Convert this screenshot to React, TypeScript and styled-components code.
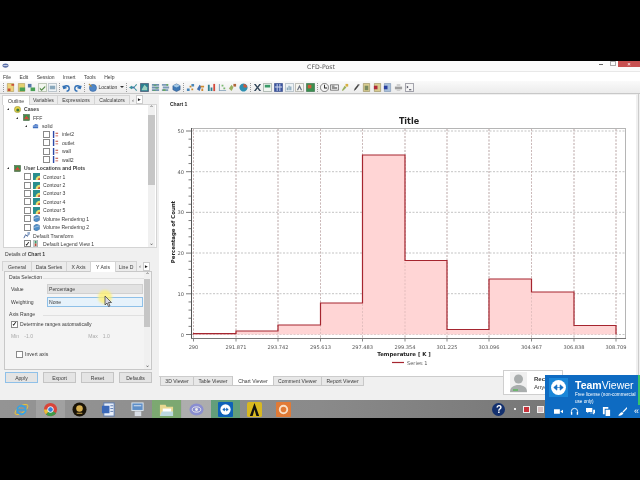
import styled, { createGlobalStyle } from 'styled-components';

const GlobalStyle = createGlobalStyle`
  html, body {
    margin: 0;
    padding: 0;
    background: #000;
  }
`;

// a = fill of the base shape, b = fill of the overlay, s = outline
type Glyph = { d: string; a: string; e?: string; b?: string; s?: string; line?: boolean };

const SHEET = 'M1.500 .5h7v9h-7z';
const BOX = 'M.5 .5h9v9h-9z';
const CUBE = 'M1 3l4-2 4 2v4.500l-4 2-4-2z';

const fileTools: Glyph[] = [
  { d: SHEET, a: '#eed27a', e: 'M2 6h3v3H2zM6 1h3v2H6z', b: '#c8503a', s: '#a89050' },
  { d: SHEET, a: '#e2d070', e: 'M3 5h6v4H3z', b: '#49a055', s: '#a89050' },
  { d: 'M1 1h4v4H1z', a: '#5578a8', e: 'M4 5h5v4H4z', b: '#49a055' },
  { d: BOX, a: '#f2f6ee', e: 'M2 5l2 2 4-4v2L4 9 2 7z', b: '#5a8f50', s: '#8a9a80' },
  { d: BOX, a: '#f0f4f6', e: 'M2 3h6v4H2z', b: '#8aa8bc', s: '#8a9aa8' },
];

const historyTools: Glyph[] = [
  { d: 'M2 6a3 3 0 1 1 3 3M1 3l1 3 3-1', a: 'none', s: '#2f6fb5', line: true },
  { d: 'M8 6a3 3 0 1 0-3 3M9 3L8 6 5 5', a: 'none', s: '#2f6fb5', line: true },
];

const locationTools: Glyph[] = [
  { d: 'M0 5l3-2 2 2-2 2zM5 5l3-4 1 1-3 3 3 3-1 1z', a: '#3a8f9a', e: 'M4 4h2v2H4z', b: '#3f6fb0' },
  { d: BOX, a: '#2c7f90', e: 'M2 7l3-5 3 3v3H2z', b: '#9cd0c0', s: '#335' },
  { d: 'M1 1h8v2H1zM1 4h8v2H1zM1 7h8v2H1z', a: '#6d8fae', e: 'M3 2h3v1H3zM5 5h3v1H5zM2 8h3v1H2z', b: '#5aa860' },
  { d: 'M1 1h7v2H1zM2 4h7v2H2zM1 7h7v2H1z', a: '#7c9ab8', e: 'M6 1h2v2H6zM2 7h3v2H2z', b: '#6aaa60' },
  { d: CUBE, a: '#3d78b5', e: 'M1 3l4 2 4-2-4-2z', b: '#a4c8e4', s: '#2a5080' },
];

const plotTools: Glyph[] = [
  { d: 'M1 6h3v3H1zM6 1h3v3H6z', a: '#4a86b8', e: 'M4 3h2v2H4zM6 6h2v2H6z', b: '#c98a2e' },
  { d: 'M1 7l3-5 2 2-2 5z', a: '#3f6fb0', e: 'M5 3h4v2H5zM6 6h2v3H6z', b: '#d08a30' },
  { d: 'M1 2h2v7H1zM4 5h2v4H4z', a: '#2f7f8f', e: 'M7 1h2v8H7z', b: '#d4483a' },
  { d: 'M1 9V1h1v7h7v1z', a: '#7d9cb5', e: 'M4 2h2v2H4zM6 5h2v2H6z', b: '#7ab870' },
  { d: 'M1 6l3-4 2 3-2 4z', a: '#9ab060', e: 'M6 1h3v3H6z', b: '#b0643a' },
  { d: 'M5 .5a4.500 4.500 0 1 0 .01 0z', a: '#2d8fb0', e: 'M5 1a4 4 0 0 1 4 4H5z', b: '#d05a3a' },
];

const reportTools: Glyph[] = [
  { d: 'M1 1h2l2 3 2-3h2L6 5l3 4H7L5 6 3 9H1l3-4z', a: '#33475a' },
  { d: BOX, a: '#f0f5f0', e: 'M2 2h6v3H2z', b: '#3a9a68', s: '#7a8a80' },
  { d: BOX, a: '#3b55a0', e: 'M3 1h1v8H3zM6 1h1v8H6zM1 4h8v1H1z', b: '#d4dcf0', s: '#2a3f80' },
  { d: BOX, a: '#eef3f6', e: 'M2 8V5h1v3zM4 8V3h1v5zM6 8V4h1v4z', b: '#5f88a0', s: '#8a9aa8' },
  { d: BOX, a: '#f6f6f0', e: 'M2 8l3-6 3 6H6.500L5 5 3.500 8z', b: '#6a7080', s: '#8a8a80' },
  { d: BOX, a: '#3a8f50', e: 'M2 2h4v4H2z', b: '#d05a3a', s: '#2a6038' },
];

const outputTools: Glyph[] = [
  { d: 'M5 .5a4.500 4.500 0 1 0 .01 0z', a: '#f4f4f4', e: 'M4.500 2h1v3H8v1H4.500z', b: '#222', s: '#222' },
  { d: 'M.5 2h9v6h-9z', a: '#f4f4f4', e: 'M2 3h3v1H2zM2 5h6v1H2z', b: '#333', s: '#222' },
  { d: 'M1 8l3-5 2 2-4 4z', a: '#9ab060', e: 'M5 1h3v3H5z', b: '#d8b040' },
  { d: 'M2 9l1-3 4-5 1.500 1-4 5z', a: '#444', e: 'M7 1l1.500 1-1 1-1.500-1z', b: '#888' },
  { d: SHEET, a: '#d9cc90', e: 'M3 3h4v5H3z', b: '#7a8a60', s: '#8a8050' },
  { d: SHEET, a: '#d9cc90', e: 'M1 3h4v4H1z', b: '#b02838', s: '#8a8050' },
  { d: SHEET, a: '#a8c0dc', e: 'M1 3h4v4H1z', b: '#2840a0', s: '#7088a8' },
  { d: 'M1 4h8v3H1z', a: '#a0a0a0', e: 'M3 1h4v3H3zM3 7h4v2H3z', b: '#d0d0d0' },
  { d: BOX, a: '#f4f4f4', e: 'M2 3l2 1.500L2 6zM4.500 7H7v1H4.500z', b: '#445', s: '#556' },
];

const ToolIcon = ({ glyph }: { glyph: Glyph }) => (
  <ToolSvg viewBox="0 0 10 10">
    <path d={glyph.d} fill={glyph.a} stroke={glyph.s || 'none'} strokeWidth={glyph.line ? 1.500 : 0.6} />
    {glyph.e && <path d={glyph.e} fill={glyph.b} />}
  </ToolSvg>
);

const ToolGroup = ({ items }: { items: Glyph[] }) => (
  <IconRun>
    {items.map((g, i) => (
      <ToolIcon key={i} glyph={g} />
    ))}
  </IconRun>
);

type TreeItem = {
  label: string;
  level: number;
  kind: 'root' | 'model' | 'solid' | 'bc' | 'contour' | 'volume' | 'transform' | 'legend';
  bold?: boolean;
  arrow?: boolean;
  check?: 'off' | 'on';
};

const treeItems: TreeItem[] = [
  { label: 'Cases', level: 7, kind: 'root', bold: true, arrow: true },
  { label: 'FFF', level: 16, kind: 'model', arrow: true },
  { label: 'solid', level: 25, kind: 'solid', arrow: true },
  { label: 'inlet2', level: 43, kind: 'bc', check: 'off' },
  { label: 'outlet', level: 43, kind: 'bc', check: 'off' },
  { label: 'wall', level: 43, kind: 'bc', check: 'off' },
  { label: 'wall2', level: 43, kind: 'bc', check: 'off' },
  { label: 'User Locations and Plots', level: 7, kind: 'model', bold: true, arrow: true },
  { label: 'Contour 1', level: 24, kind: 'contour', check: 'off' },
  { label: 'Contour 2', level: 24, kind: 'contour', check: 'off' },
  { label: 'Contour 3', level: 24, kind: 'contour', check: 'off' },
  { label: 'Contour 4', level: 24, kind: 'contour', check: 'off' },
  { label: 'Contour 5', level: 24, kind: 'contour', check: 'off' },
  { label: 'Volume Rendering 1', level: 24, kind: 'volume', check: 'off' },
  { label: 'Volume Rendering 2', level: 24, kind: 'volume', check: 'off' },
  { label: 'Default Transform', level: 23, kind: 'transform' },
  { label: 'Default Legend View 1', level: 24, kind: 'legend', check: 'on' },
];

const TreeIcon = ({ kind }: { kind: TreeItem['kind'] }) => {
  switch (kind) {
    case 'root':
      return (
        <TreeSvg viewBox="0 0 8 8">
          <circle cx="4" cy="4" r="3.600" fill="#e6d34a" stroke="#7b7b30" strokeWidth=".5" />
          <circle cx="4.400" cy="4.600" r="1.800" fill="#3c7a3c" />
        </TreeSvg>
      );
    case 'model':
      return (
        <TreeSvg viewBox="0 0 8 8">
          <rect x=".5" y=".5" width="7" height="7" fill="#3f8f4a" stroke="#3a4a30" strokeWidth=".5" />
          <path d="M1 6l3-4 3 4z" fill="#d0483a" />
        </TreeSvg>
      );
    case 'solid':
      return (
        <TreeSvg viewBox="0 0 8 8">
          <path d="M1 3l3-2 3 1v4H1z" fill="#3f6fc0" />
          <path d="M1 3h6v1H1z" fill="#a8c4ec" />
        </TreeSvg>
      );
    case 'bc':
      return (
        <TreeSvg viewBox="0 0 8 8">
          <path d="M1 0h1.600v8H1z" fill="#2c48a8" />
          <path d="M4 2h3v1H4zM4 5h3v1H4z" fill="#c0483a" />
        </TreeSvg>
      );
    case 'contour':
      return (
        <TreeSvg viewBox="0 0 8 8">
          <rect width="8" height="8" fill="#2a8f8f" />
          <path d="M3 8c0-3 2-5 5-5v5z" fill="#e8e070" />
          <path d="M5.500 8c0-1.500 1-2.500 2.500-2.500V8z" fill="#d05a3a" />
        </TreeSvg>
      );
    case 'volume':
      return (
        <TreeSvg viewBox="0 0 8 8">
          <path d="M1 2l3-2 3.500 1.500V6L4 8 1 6.500z" fill="#4f8fc8" stroke="#2a4a78" strokeWidth=".4" />
          <path d="M1 4l3-1 3.500-1" stroke="#e8f0f8" strokeWidth=".6" fill="none" />
        </TreeSvg>
      );
    case 'transform':
      return (
        <TreeSvg viewBox="0 0 8 8">
          <path d="M1 7l2-4 2 2 2-4" stroke="#35558f" strokeWidth="1" fill="none" />
          <path d="M5 0h3v3H5z" fill="#9ab0d0" />
        </TreeSvg>
      );
    default:
      return (
        <TreeSvg viewBox="0 0 8 8">
          <rect x="1" y="0" width="4" height="8" fill="#e8f0e8" stroke="#456" strokeWidth=".5" />
          <rect x="2" y="1" width="2" height="3" fill="#3a9a6a" />
          <rect x="2" y="4" width="2" height="3" fill="#c0483a" />
        </TreeSvg>
      );
  }
};

const TreeRowItem = ({ item }: { item: TreeItem }) => (
  <TreeRow $level={item.level}>
    {item.arrow && <Expander />}
    {item.check && <CheckBox>{item.check === 'on' ? '✓' : ''}</CheckBox>}
    <TreeIcon kind={item.kind} />
    <TreeLabel $bold={item.bold}>{item.label}</TreeLabel>
  </TreeRow>
);

const xTicks = [
  { x: 193.500, label: '290' },
  { x: 236, label: '291.871' },
  { x: 278, label: '293.742' },
  { x: 320.500, label: '295.613' },
  { x: 362.500, label: '297.483' },
  { x: 405, label: '299.354' },
  { x: 447, label: '301.225' },
  { x: 489, label: '303.096' },
  { x: 531.500, label: '304.967' },
  { x: 574, label: '306.838' },
  { x: 616, label: '308.709' },
];

const yTicks = [
  { y: 131, label: '50' },
  { y: 171.700, label: '40' },
  { y: 212.300, label: '30' },
  { y: 253, label: '20' },
  { y: 293.700, label: '10' },
  { y: 334.500, label: '0' },
];

const barTops = [333.700, 331, 325, 303, 155, 260.500, 329.500, 279, 292, 325.500];

const histogram =
  `M${xTicks[0].x} 334.500 ` +
  barTops.map((t, i) => `L${xTicks[i].x} ${t} L${xTicks[i + 1].x} ${t}`).join(' ') +
  ` L${xTicks[10].x} 334.500`;

const minorTicks = Array.from({ length: 26 }, (_, i) => 334.500 - i * 8.140);

const Histogram = () => (
  <ChartSvg viewBox="159 104 477 273">
    <rect x="191.500" y="128.500" width="434" height="210" fill="#fff" stroke="#b5b5b5" />
    {xTicks.map((t) => (
      <line key={t.x} x1={t.x} x2={t.x} y1="129" y2="338" stroke="#b4b4b4" strokeWidth=".8" strokeDasharray="2 1.500" />
    ))}
    {yTicks.map((t) => (
      <line key={t.y} x1="192" x2="625" y1={t.y} y2={t.y} stroke="#b4b4b4" strokeWidth=".8" strokeDasharray="2 1.500" />
    ))}
    <path d={histogram + ' Z'} fill="#ffd5d5" stroke="none" />
    {xTicks.map((t) => (
      <line key={`o${t.x}`} x1={t.x} x2={t.x} y1="129" y2="338" stroke="#d0b0b0" strokeWidth=".6" strokeDasharray="2 1.500" />
    ))}
    <path d={histogram} fill="none" stroke="#a5252f" strokeWidth="1.200" />
    <line x1="191.500" x2="191.500" y1="128" y2="339" stroke="#555" />
    <line x1="191" x2="626" y1="338.500" y2="338.500" stroke="#777" />
    {minorTicks.map((y, i) => (
      <line key={y} x1={i % 5 === 0 ? 186 : 188.500} x2="191" y1={y} y2={y} stroke="#444" strokeWidth=".7" />
    ))}
    {xTicks.map((t) => (
      <line key={`t${t.x}`} x1={t.x} x2={t.x} y1="339" y2="341.500" stroke="#555" strokeWidth=".7" />
    ))}
    {yTicks.map((t) => (
      <AxisText key={t.label} x="184" y={t.y + 2} textAnchor="end">
        {t.label}
      </AxisText>
    ))}
    {xTicks.map((t) => (
      <AxisText key={t.label} x={t.x} y="349" textAnchor="middle">
        {t.label}
      </AxisText>
    ))}
    <TitleText x="409" y="124" textAnchor="middle">Title</TitleText>
    <AxisTitle x="404" y="356" textAnchor="middle">Temperature [ K ]</AxisTitle>
    <AxisTitle transform="translate(175 232) rotate(-90)" textAnchor="middle">Percentage of Count</AxisTitle>
    <line x1="392" x2="404" y1="362.500" y2="362.500" stroke="#a5252f" strokeWidth="1.200" />
    <AxisText x="407" y="364.500">Series 1</AxisText>
  </ChartSvg>
);

const TaskIcons = () => (
  <>
    <TaskSlot>
      <TaskSvg viewBox="0 0 16 16">
        <ellipse cx="8" cy="8" rx="8" ry="3.500" fill="none" stroke="#e8c23a" strokeWidth="1" transform="rotate(-35 8 8)" />
        <circle cx="8" cy="8.500" r="4.500" fill="none" stroke="#3aa0e0" strokeWidth="2" />
        <path d="M4 8.500h8" stroke="#3aa0e0" strokeWidth="1.500" />
      </TaskSvg>
    </TaskSlot>
    <TaskSlot $tint="rgba(255,255,255,.14)">
      <TaskSvg viewBox="0 0 16 16">
        <circle cx="8" cy="8" r="7" fill="#d8443a" />
        <path d="M8 8L14 12A7 7 0 0 1 3 13z" fill="#3d9a4a" />
        <path d="M8 8L3 13a7 7 0 0 1-2-5h7z" fill="#e8c23a" />
        <circle cx="8" cy="8" r="3" fill="#3a80d8" stroke="#fff" strokeWidth="1" />
      </TaskSvg>
    </TaskSlot>
    <TaskSlot>
      <TaskSvg viewBox="0 0 16 16">
        <circle cx="8" cy="8" r="7.500" fill="#1a1408" />
        <circle cx="8" cy="7" r="3.500" fill="#d8b050" />
        <path d="M5 12h6" stroke="#d8b050" />
      </TaskSvg>
    </TaskSlot>
    <TaskSlot>
      <TaskSvg viewBox="0 0 16 16">
        <rect x="3" y="1" width="11" height="14" fill="#e8eef8" stroke="#5a7ab0" />
        <rect x="1" y="4" width="8" height="8" fill="#3a68b8" />
        <path d="M10 4h3M10 7h3M10 10h3" stroke="#5a7ab0" />
      </TaskSvg>
    </TaskSlot>
    <TaskSlot>
      <TaskSvg viewBox="0 0 16 16">
        <rect x="2" y="1" width="12" height="8" fill="#5f8fc8" stroke="#e0e8f0" />
        <rect x="5" y="10" width="7" height="5" fill="#d8dde5" />
        <path d="M4 4h8" stroke="#e0e8f0" />
      </TaskSvg>
    </TaskSlot>
    <TaskSlot $tint="rgba(110,190,90,.55)">
      <TaskSvg viewBox="0 0 16 16">
        <path d="M1 3h6l1 2h7v10H1z" fill="#e8d890" />
        <rect x="4" y="7" width="9" height="5" fill="#fff" />
        <path d="M1 15l2-5h12v5z" fill="#bcd8e0" />
      </TaskSvg>
    </TaskSlot>
    <TaskGap />
    <TaskSlot $tint="rgba(255,255,255,.28)">
      <TaskSvg viewBox="0 0 16 16">
        <ellipse cx="8" cy="8" rx="7.500" ry="6.500" fill="#8a8ed0" />
        <ellipse cx="8" cy="8" rx="4.500" ry="2.800" fill="none" stroke="#eee" strokeWidth="1" />
        <circle cx="8" cy="8" r="1.500" fill="#eee" />
      </TaskSvg>
    </TaskSlot>
    <TaskSlot $tint="rgba(70,170,110,.6)">
      <TaskSvg viewBox="0 0 16 16">
        <rect width="16" height="16" rx="1" fill="#0e62b8" />
        <circle cx="8" cy="8" r="5.500" fill="#fff" />
        <path d="M5 8l2-1.500v3zM11 8L9 6.500v3zM6.500 8h3" fill="#0e62b8" stroke="#0e62b8" strokeWidth=".6" />
      </TaskSvg>
    </TaskSlot>
    <TaskSlot>
      <TaskSvg viewBox="0 0 16 16">
        <rect width="16" height="16" rx="2" fill="#d8b820" />
        <path d="M3 15L8 1l5 14h-3L8 8l-2 7z" fill="#111" />
      </TaskSvg>
    </TaskSlot>
    <TaskSlot>
      <TaskSvg viewBox="0 0 16 16">
        <rect width="16" height="16" rx="1" fill="#e07a36" />
        <circle cx="8" cy="8" r="4" fill="none" stroke="#f8e0c8" strokeWidth="2" />
      </TaskSvg>
    </TaskSlot>
  </>
);

const TeamViewerToast = () => (
  <Toast>
    <ToastHead>
      <ToastLogo>
        <svg width="17" height="17" viewBox="0 0 16 16">
          <circle cx="8" cy="8" r="7" fill="#fff" />
          <path d="M3.500 8l3-2.500v5zM12.500 8l-3-2.500v5zM6 8h4" fill="#0e6bc2" stroke="#0e6bc2" strokeWidth=".6" />
        </svg>
      </ToastLogo>
      <ToastText>
        <ToastBrand>
          <b>Team</b>Viewer
        </ToastBrand>
        <ToastNote>
          Free license (non-commercial
          <br />
          use only)
        </ToastNote>
      </ToastText>
    </ToastHead>
    <ToastActions>
      <svg width="9" height="9" viewBox="0 0 10 10"><path d="M0 2.500h6.500v5H0zM7 5l3-2v4z" fill="#fff" /></svg>
      <svg width="9" height="9" viewBox="0 0 10 10"><path d="M1.500 6V5a3.500 3.500 0 0 1 7 0v1" stroke="#fff" fill="none" /><path d="M1 5.500h1.500v3H1zM7.500 5.500H9v3H7.500z" fill="#fff" /></svg>
      <svg width="9" height="9" viewBox="0 0 10 10"><path d="M0 1h7v4.500H3L1.500 7V5.500H0zM8 3h2v4H9v1.500L7.500 7H4.500V6.500H8z" fill="#fff" /></svg>
      <svg width="9" height="9" viewBox="0 0 10 10"><path d="M1 0h6v2H3v6H1zM4 3h5v7H4z" fill="#fff" /></svg>
      <svg width="9" height="9" viewBox="0 0 10 10"><path d="M10 0L5 5l1 1 4-4zM4.500 5.500L6 7c-1 2-3 3-6 2.500 1.500-1 2-3 4.500-4z" fill="#fff" /></svg>
      <ToastMore>«</ToastMore>
    </ToastActions>
    <ToastStrip />
  </Toast>
);

const App = () => {
  return (
    <Screen>
      <GlobalStyle />
      <Letterbox $height={61} />
      <Window>
        <TitleBar>
          <svg width="7" height="6" viewBox="0 0 8 7">
            <ellipse cx="4" cy="3" rx="3.500" ry="2.500" fill="#5b6fa8" />
            <path d="M1.500 3h5" stroke="#dfe6f2" />
          </svg>
          <TitleName>CFD-Post</TitleName>
          <WindowControls>
            <MinButton />
            <MaxButton />
            <CloseButton>×</CloseButton>
          </WindowControls>
        </TitleBar>
        <MenuBar>
          {['File', 'Edit', 'Session', 'Insert', 'Tools', 'Help'].map((m) => (
            <MenuItem key={m}>{m}</MenuItem>
          ))}
        </MenuBar>
        <Toolbar>
          <ToolDivider />
          <ToolGroup items={fileTools} />
          <ToolDivider />
          <ToolGroup items={historyTools} />
          <ToolDivider />
          <LocationButton>
            <svg width="9" height="9" viewBox="0 0 10 10">
              <circle cx="5.500" cy="5.500" r="4" fill="#4f86c6" stroke="#2b5a94" strokeWidth=".5" />
              <path d="M1 1l3 3" stroke="#b08a3a" strokeWidth="1.400" />
            </svg>
            <span>Location</span>
            <Caret />
          </LocationButton>
          <ToolDivider />
          <ToolGroup items={locationTools} />
          <ToolDivider />
          <ToolGroup items={plotTools} />
          <ToolDivider />
          <ToolGroup items={reportTools} />
          <ToolDivider />
          <ToolGroup items={outputTools} />
        </Toolbar>
        <Body>
          <LeftPane>
            <TabStrip $h={9}>
              <Tab $w={28} $active>Outline</Tab>
              <Tab $w={29}>Variables</Tab>
              <Tab $w={38}>Expressions</Tab>
              <Tab $w={36}>Calculators</Tab>
              <TabArrows>
                <span>‹</span>
                <b>▸</b>
              </TabArrows>
            </TabStrip>
            <TreePanel>
              <TreeList>
                {treeItems.map((item) => (
                  <TreeRowItem key={item.label} item={item} />
                ))}
              </TreeList>
              <ScrollTrack $w={7}>
                <ScrollArrow>⌃</ScrollArrow>
                <ScrollThumb $top={3} $h={70} />
                <ScrollArrow>⌄</ScrollArrow>
              </ScrollTrack>
            </TreePanel>
            <DetailsTitle>
              Details of <b>Chart 1</b>
            </DetailsTitle>
            <TabStrip $h={10}>
              <Tab $w={30}>General</Tab>
              <Tab $w={36}>Data Series</Tab>
              <Tab $w={25}>X Axis</Tab>
              <Tab $w={26} $active>Y Axis</Tab>
              <Tab $w={22}>Line D</Tab>
              <TabArrows>
                <span>‹</span>
                <b>▸</b>
              </TabArrows>
            </TabStrip>
            <DetailsPanel>
              <DetailsBody>
                <SectionLabel>Data Selection</SectionLabel>
                <FieldRow>
                  <FieldLabel>Value</FieldLabel>
                  <FieldInput>Percentage</FieldInput>
                </FieldRow>
                <FieldRow>
                  <FieldLabel>Weighting</FieldLabel>
                  <FieldInput $focus>None</FieldInput>
                </FieldRow>
                <SectionLabel $top={2}>Axis Range</SectionLabel>
                <CheckRow>
                  <CheckBox>✓</CheckBox>
                  <span>Determine ranges automatically</span>
                </CheckRow>
                <RangeRow>
                  <span>Min</span>
                  <RangeValue>-1.0</RangeValue>
                  <span>Max</span>
                  <RangeValue>1.0</RangeValue>
                </RangeRow>
                <InvertRow>
                  <CheckBox />
                  <span>Invert axis</span>
                </InvertRow>
              </DetailsBody>
              <ScrollTrack $w={6}>
                <ScrollArrow>⌃</ScrollArrow>
                <ScrollThumb $top={0} $h={48} />
                <ScrollArrow>⌄</ScrollArrow>
              </ScrollTrack>
            </DetailsPanel>
            <ButtonRow>
              <ActionButton $primary>Apply</ActionButton>
              <ActionButton>Export</ActionButton>
              <ActionButton>Reset</ActionButton>
              <ActionButton>Defaults</ActionButton>
            </ButtonRow>
          </LeftPane>
          <RightPane>
            <ChartPanel>
              <ChartHeading>Chart 1</ChartHeading>
              <Histogram />
            </ChartPanel>
            <ViewerTabs>
              <ViewerTab $w={34}>3D Viewer</ViewerTab>
              <ViewerTab $w={40}>Table Viewer</ViewerTab>
              <ViewerTab $w={42} $active>Chart Viewer</ViewerTab>
              <ViewerTab $w={49}>Comment Viewer</ViewerTab>
              <ViewerTab $w={43}>Report Viewer</ViewerTab>
            </ViewerTabs>
          </RightPane>
        </Body>
        <CursorHalo />
        <Cursor width="8" height="11" viewBox="0 0 8 11">
          <path d="M1 0v9l2-2 1.500 3.500 1.500-.6L4.500 6.500H7.500z" fill="#d8d8e4" stroke="#333" strokeWidth=".7" />
        </Cursor>
      </Window>
      <Taskbar>
        <TaskIcons />
        <TrayArea>
          <HelpBadge>?</HelpBadge>
          <TrayDot />
          <TraySquare $color="#c8323a" />
          <TraySquare $color="#d8c0c0" />
        </TrayArea>
      </Taskbar>
      <Letterbox $height={62} />
      <NoticeCard>
        <NoticeAvatar>
          <svg width="17" height="21" viewBox="0 0 17 21">
            <circle cx="8.500" cy="7" r="4.500" fill="#a9adad" />
            <path d="M0 20c0-5 4-7 8.500-7S17 15 17 20z" fill="#a9adad" />
            <path d="M3 18h5" stroke="#5cb85c" strokeWidth="1.500" />
          </svg>
        </NoticeAvatar>
        <NoticeText>
          <b>Rece</b>
          <span>Anyc</span>
        </NoticeText>
      </NoticeCard>
      <TeamViewerToast />
    </Screen>
  );
};

const UI_FONT = `'Liberation Sans', Arial, sans-serif`;
const CHART_FONT = `'DejaVu Sans', Verdana, sans-serif`;

const Screen = styled.div`
  position: relative;
  width: 640px;
  height: 480px;
  overflow: hidden;
  background: #000;
  font-family: ${UI_FONT};
  font-size: 5.100px;
  color: #3a3a3a;
  filter: blur(0.3px);
`;

const Letterbox = styled.div<{ $height: number }>`
  height: ${(p) => p.$height}px;
  background: #000;
`;

const Window = styled.div`
  position: relative;
  display: flex;
  flex-direction: column;
  height: 339px;
  background: #f0f0f0;
`;

const TitleBar = styled.div`
  display: grid;
  grid-template-columns: 1fr auto 1fr;
  align-items: center;
  height: 10px;
  padding-left: 2px;
  background: #fbfbfb;
`;

const TitleName = styled.div`
  font-family: ${CHART_FONT};
  font-size: 6.200px;
  color: #555;
`;

const WindowControls = styled.div`
  display: flex;
  align-items: flex-start;
  align-self: start;
  justify-self: end;
  gap: 7px;
`;

const MinButton = styled.div`
  width: 4px;
  height: 1px;
  margin-top: 3px;
  background: #666;
`;

const MaxButton = styled.div`
  width: 4px;
  height: 3px;
  border: 1px solid #aaa;
`;

const CloseButton = styled.div`
  width: 22px;
  height: 6px;
  margin-left: -5px;
  background: #c75050;
  color: #fff;
  font-size: 6px;
  line-height: 6px;
  text-align: center;
`;

const MenuBar = styled.div`
  display: flex;
  align-items: center;
  gap: 8.500px;
  height: 10px;
  padding-left: 3px;
  background: #fff;
  border-top: 1px solid #e8e8e8;
  box-sizing: border-box;
`;

const MenuItem = styled.span`
  font-size: 5px;
`;

const Toolbar = styled.div`
  display: flex;
  align-items: center;
  height: 12px;
  padding-left: 2px;
  gap: 1px;
  background: linear-gradient(#fafafa, #ececec);
  border-bottom: 1px solid #c8c8c8;
`;

const ToolDivider = styled.div`
  width: 0;
  height: 9px;
  margin: 0 1px;
  border-left: 1px dotted #999;
`;

const IconRun = styled.div`
  display: flex;
  align-items: center;
  gap: 1.600px;
`;

const ToolSvg = styled.svg`
  width: 9px;
  height: 9px;
  flex: none;
`;

const LocationButton = styled.div`
  display: flex;
  align-items: center;
  gap: 1px;
  width: 36px;
  margin-left: 1.500px;
  font-size: 5px;
`;

const Caret = styled.i`
  width: 0;
  height: 0;
  margin-left: 2px;
  border-left: 2px solid transparent;
  border-right: 2px solid transparent;
  border-top: 2px solid #333;
`;

const Body = styled.div`
  flex: 1;
  display: flex;
  min-height: 0;
`;

const LeftPane = styled.div`
  width: 159px;
  flex: none;
  padding: 1px 2px 0 3px;
  box-sizing: border-box;
  display: flex;
  flex-direction: column;
`;

const TabStrip = styled.div<{ $h: number }>`
  display: flex;
  height: ${(p) => p.$h}px;
  flex: none;
`;

const Tab = styled.div<{ $w: number; $active?: boolean }>`
  width: ${(p) => p.$w}px;
  height: calc(100% + ${(p) => (p.$active ? 1 : 0)}px);
  box-sizing: border-box;
  display: flex;
  align-items: center;
  justify-content: center;
  white-space: nowrap;
  overflow: hidden;
  background: ${(p) => (p.$active ? '#fff' : '#ececec')};
  border: 1px solid #d4d4d4;
  border-bottom: none;
  margin-left: -1px;
  z-index: ${(p) => (p.$active ? 1 : 0)};
`;

const TabArrows = styled.div`
  display: flex;
  align-items: center;
  gap: 2px;
  padding-left: 2px;
  font-size: 6px;
  color: #555;

  b {
    background: #fff;
    color: #111;
    padding: 0 1px;
    border: 1px solid #ccc;
    line-height: 7px;
    font-size: 5px;
  }
`;

const TreePanel = styled.div`
  display: flex;
  height: 144px;
  flex: none;
  background: #fff;
  border: 1px solid #d4d4d4;
  box-sizing: border-box;
`;

const TreeList = styled.div`
  flex: 1;
  min-width: 0;
`;

const TreeRow = styled.div<{ $level: number }>`
  display: flex;
  align-items: center;
  gap: 2px;
  height: 8.430px;
  padding-left: ${(p) => p.$level - 4}px;
  white-space: nowrap;
`;

const Expander = styled.i`
  width: 0;
  height: 0;
  margin-right: 3px;
  border-left: 2.500px solid transparent;
  border-bottom: 2.500px solid #333;
`;

const CheckBox = styled.span`
  display: inline-flex;
  align-items: center;
  justify-content: center;
  box-sizing: border-box;
  width: 7px;
  height: 7px;
  flex: none;
  background: #fff;
  border: 1px solid #8a8a8a;
  color: #111;
  font-size: 6px;
  font-weight: 700;
  line-height: 6px;
`;

const TreeSvg = styled.svg`
  width: 7px;
  height: 7px;
  flex: none;
`;

const TreeLabel = styled.span<{ $bold?: boolean }>`
  margin-left: 1px;
  font-weight: ${(p) => (p.$bold ? 700 : 400)};
`;

const ScrollTrack = styled.div<{ $w: number }>`
  width: ${(p) => p.$w}px;
  flex: none;
  margin-right: 1px;
  background: #f0f0f0;
  display: flex;
  flex-direction: column;
  justify-content: space-between;
  align-items: center;
`;

const ScrollArrow = styled.span`
  font-size: 6px;
  line-height: 7px;
  color: #555;
`;

const ScrollThumb = styled.div<{ $top: number; $h: number }>`
  width: 100%;
  height: ${(p) => p.$h}px;
  margin-top: ${(p) => p.$top}px;
  margin-bottom: auto;
  background: #c6c6c6;
`;

const DetailsTitle = styled.div`
  height: 13px;
  padding: 1px 0 0 2px;
  box-sizing: border-box;
  line-height: 11px;
  flex: none;
`;

const DetailsPanel = styled.div`
  display: flex;
  height: 99px;
  flex: none;
  margin: 0 5px 0 1px;
  background: #f4f4f4;
  border: 1px solid #c8c8c8;
  box-sizing: border-box;
`;

const DetailsBody = styled.div`
  flex: 1;
  padding: 1px 0 0 6px;
  min-width: 0;
`;

const SectionLabel = styled.div<{ $top?: number }>`
  height: 9px;
  line-height: 9px;
  margin: ${(p) => p.$top || 0}px 0 0 -2px;
  position: relative;

  &::after {
    content: '';
    position: absolute;
    left: 34px;
    right: 0;
    top: 5px;
    border-top: 1px solid #e0e0e0;
  }
`;

const FieldRow = styled.div`
  display: flex;
  align-items: center;
  height: 13px;
`;

const FieldLabel = styled.div`
  width: 36px;
  flex: none;
`;

const FieldInput = styled.div<{ $focus?: boolean }>`
  flex: 1;
  height: 8px;
  line-height: 8px;
  padding-left: 1px;
  background: ${(p) => (p.$focus ? '#e6f2fb' : '#e2e2e2')};
  border: 1px solid ${(p) => (p.$focus ? '#8ec0e8' : '#d0d0d0')};
  margin-right: 1px;
`;

const CheckRow = styled.div`
  display: flex;
  align-items: center;
  gap: 2px;
  height: 12px;
  margin-top: -1px;
`;

const RangeRow = styled.div`
  display: flex;
  align-items: center;
  height: 12px;
  color: #aaa;

  span:nth-child(3) {
    margin-left: 50px;
  }
`;

const RangeValue = styled.em`
  font-style: normal;
  margin-left: 5px;
  width: 14px;
`;

const InvertRow = styled.div`
  display: flex;
  align-items: center;
  gap: 2px;
  height: 12px;
  margin: 6px 0 0 5px;
`;

const ButtonRow = styled.div`
  display: flex;
  justify-content: space-between;
  height: 11px;
  margin: 2px 5px 0 2px;
  flex: none;
`;

const ActionButton = styled.div<{ $primary?: boolean }>`
  width: 33px;
  box-sizing: border-box;
  display: flex;
  align-items: center;
  justify-content: center;
  background: #e4e4e4;
  border: 1px solid ${(p) => (p.$primary ? '#8fc0e8' : '#c4c4c4')};
`;

const RightPane = styled.div`
  flex: 1;
  min-width: 0;
  display: flex;
  flex-direction: column;
  padding-top: 1px;
  padding-right: 2px;
  border-right: 1px solid #ccc;
  margin-right: 1px;
`;

const ChartPanel = styled.div`
  height: 282px;
  flex: none;
  background: #fff;
  border-bottom: 1px solid #ccc;
  box-sizing: border-box;
  display: flex;
  flex-direction: column;
  overflow: hidden;
`;

const ChartHeading = styled.div`
  height: 9px;
  padding: 5px 0 0 11px;
  line-height: 9px;
  font-size: 5px;
  font-weight: 700;
  color: #222;
  flex: none;
`;

const ChartSvg = styled.svg`
  display: block;
  flex: none;
  width: 477px;
  height: 273px;
  margin-top: -5px;
`;

const AxisText = styled.text`
  font-family: ${CHART_FONT};
  font-size: 5.100px;
  fill: #555;
`;

const AxisTitle = styled.text`
  font-family: ${CHART_FONT};
  font-size: 5.400px;
  font-weight: 700;
  fill: #222;
`;

const TitleText = styled.text`
  font-family: ${CHART_FONT};
  font-size: 8px;
  font-weight: 700;
  fill: #222;
`;

const ViewerTabs = styled.div`
  display: flex;
  margin-left: 1px;
`;

const ViewerTab = styled.div<{ $w: number; $active?: boolean }>`
  width: ${(p) => p.$w}px;
  height: ${(p) => (p.$active ? 10 : 9)}px;
  margin-top: ${(p) => (p.$active ? -1 : 0)}px;
  box-sizing: border-box;
  display: flex;
  align-items: center;
  justify-content: center;
  white-space: nowrap;
  background: ${(p) => (p.$active ? '#fff' : '#e8e8e8')};
  border: 1px solid #c8c8c8;
  border-top: none;
  margin-right: -1px;
`;

const CursorHalo = styled.div`
  position: absolute;
  left: 98px;
  top: 229px;
  width: 14px;
  height: 14px;
  border-radius: 50%;
  background: rgba(255, 240, 110, 0.75);
  filter: blur(1px);
`;

const Cursor = styled.svg`
  position: absolute;
  left: 104px;
  top: 235px;
`;

const Taskbar = styled.div`
  display: flex;
  align-items: stretch;
  height: 18px;
  padding-left: 6.500px;
  background: linear-gradient(90deg, #949494, #8a8a8a 50%, #6f6f6f);
`;

const TaskSlot = styled.div<{ $tint?: string }>`
  width: 29.100px;
  display: flex;
  align-items: center;
  justify-content: center;
  background: ${(p) => p.$tint || 'transparent'};
`;

const TaskGap = styled.div`
  width: 0;
  border-left: 1px solid #a8a8a8;
`;

const TaskSvg = styled.svg`
  width: 15px;
  height: 15px;
`;

const TrayArea = styled.div`
  display: flex;
  align-items: center;
  margin-left: 194px;
  gap: 4px;
`;

const HelpBadge = styled.div`
  width: 13px;
  height: 13px;
  border-radius: 50%;
  background: #13306e;
  color: #fff;
  font-size: 10px;
  font-weight: 700;
  text-align: center;
  line-height: 13px;
`;

const TrayDot = styled.div`
  width: 2px;
  height: 2px;
  margin-left: 4.500px;
  background: #eee;
`;

const TraySquare = styled.div<{ $color: string }>`
  width: 5px;
  height: 5px;
  margin-left: 3px;
  background: ${(p) => p.$color};
  border: 1px solid #eee;
`;

const NoticeCard = styled.div`
  position: absolute;
  left: 503px;
  top: 370px;
  width: 60px;
  height: 25px;
  box-sizing: border-box;
  display: flex;
  align-items: center;
  gap: 7px;
  padding-left: 6px;
  background: #fff;
  border: 1px solid #cfcfcf;
`;

const NoticeAvatar = styled.div`
  display: flex;
  background: #efefef;
`;

const NoticeText = styled.div`
  display: flex;
  flex-direction: column;
  font-size: 6px;
  line-height: 8px;
`;

const Toast = styled.div`
  position: absolute;
  left: 545px;
  top: 375px;
  width: 95px;
  height: 43px;
  box-sizing: border-box;
  padding: 3px 0 0 4px;
  background: #0e6bc2;
  color: #fff;
  overflow: hidden;
`;

const ToastHead = styled.div`
  display: flex;
  gap: 7px;
  height: 22px;
`;

const ToastLogo = styled.div`
  width: 19px;
  height: 19px;
  flex: none;
  display: flex;
  align-items: center;
  justify-content: center;
  background: #1a86d8;
`;

const ToastText = styled.div`
  width: 63px;
  flex: none;
`;

const ToastBrand = styled.div`
  font-size: 10.500px;
  line-height: 11px;
  margin-top: 2px;
  white-space: nowrap;
`;

const ToastNote = styled.div`
  font-size: 4.600px;
  line-height: 7px;
  white-space: nowrap;
`;

const ToastActions = styled.div`
  display: flex;
  align-items: center;
  gap: 7px;
  margin: 7px 0 0 5px;
`;

const ToastMore = styled.span`
  font-size: 9px;
  line-height: 9px;
`;

const ToastStrip = styled.div`
  position: absolute;
  right: 0;
  top: 0;
  width: 2px;
  height: 30px;
  background: #36c46a;
`;

export default App;
